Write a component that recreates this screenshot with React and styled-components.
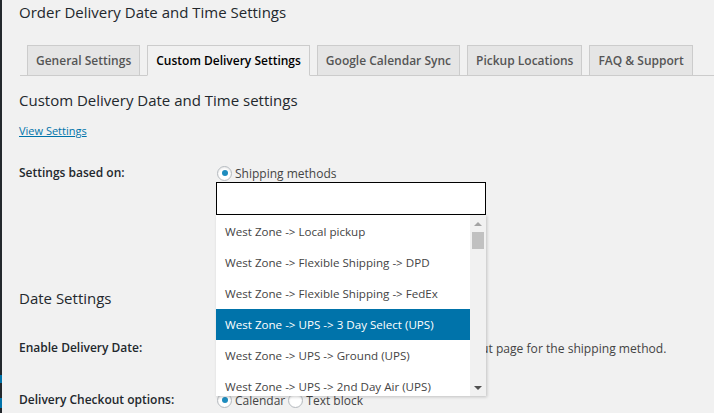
import React from 'react';
import styled, { createGlobalStyle } from 'styled-components';

const GlobalStyle = createGlobalStyle`
    html, body {
        margin: 0;
        padding: 0;
        background: #f1f1f1;
    }
    body {
        font-family: "Open Sans", "Liberation Sans", sans-serif;
        font-size: 12px;
        color: #23282d;
        overflow: hidden;
    }
`;

const tabs = ['General Settings', 'Custom Delivery Settings', 'Google Calendar Sync', 'Pickup Locations', 'FAQ & Support'];

const methods = [
    'West Zone -> Local pickup',
    'West Zone -> Flexible Shipping -> DPD',
    'West Zone -> Flexible Shipping -> FedEx',
    'West Zone -> UPS -> 3 Day Select (UPS)',
    'West Zone -> UPS -> Ground (UPS)',
    'West Zone -> UPS -> 2nd Day Air (UPS)',
];

const App = () => {
    return (
        <Page>
            <GlobalStyle />
            <AdminBar>
                <MenuMark top={375} size={8} />
                <MenuMark top={15} size={10} />
            </AdminBar>
            <Main>
                <Title>Order Delivery Date and Time Settings</Title>
                <TabNav>
                    {tabs.map((t) => (
                        <Tab key={t} active={t === 'Custom Delivery Settings'}>{t}</Tab>
                    ))}
                </TabNav>
                <SubTitle>Custom Delivery Date and Time settings</SubTitle>
                <ViewLink href="#">View Settings</ViewLink>

                <Row top={24}>
                    <Label>Settings based on:</Label>
                    <Field>
                        <RadioLine>
                            <Radio checked />
                            <span>Shipping methods</span>
                        </RadioLine>
                        <SelectWrap>
                            <SearchBox />
                            <Dropdown>
                                <Options>
                                    {methods.map((m, i) => (
                                        <Option key={m} selected={i === 3}>{m}</Option>
                                    ))}
                                </Options>
                                <Scrollbar>
                                    <Arrow up />
                                    <Thumb />
                                    <Track />
                                    <Arrow />
                                </Scrollbar>
                            </Dropdown>
                        </SelectWrap>
                    </Field>
                </Row>

                <SectionTitle>Date Settings</SectionTitle>

                <Row top={29}>
                    <Label>Enable Delivery Date:</Label>
                    <Field>
                        <RadioLine>
                            <Check />
                            <Desc>Enable Delivery Date capture on the checkout page for the shipping method.</Desc>
                        </RadioLine>
                    </Field>
                </Row>

                <Row top={34}>
                    <Label>Delivery Checkout options:</Label>
                    <Field>
                        <RadioLine>
                            <Radio checked />
                            <span>Calendar</span>
                            <Radio />
                            <span>Text block</span>
                        </RadioLine>
                    </Field>
                </Row>
            </Main>
        </Page>
    );
};

const Page = styled.div`
    display: flex;
    height: 413px;
    overflow: hidden;
`;

const AdminBar = styled.div`
    width: 2px;
    flex-shrink: 0;
    background: #23282d;
    display: flex;
    flex-direction: column;
`;

const MenuMark = styled.div`
    margin-top: ${(p) => p.top}px;
    height: ${(p) => p.size}px;
    background: #0073aa;
`;

const Main = styled.div`
    flex: 1;
    padding-left: 17px;
    display: flex;
    flex-direction: column;
    align-items: flex-start;
`;

const Title = styled.h1`
    margin: 0;
    font-size: 15px;
    line-height: 24px;
    font-weight: 400;
    color: #23282d;
`;

const TabNav = styled.div`
    align-self: stretch;
    margin-top: 21px;
    margin-left: 1px;
    padding-left: 7px;
    display: flex;
    gap: 7px;
    border-bottom: 1px solid #ccc;
`;

const Tab = styled.div`
    height: 29px;
    padding: 0 8px;
    display: flex;
    align-items: center;
    margin-bottom: -1px;
    border: 1px solid #ccc;
    border-bottom-color: ${(p) => (p.active ? '#f1f1f1' : '#ccc')};
    background: ${(p) => (p.active ? '#f1f1f1' : '#e5e5e5')};
    color: ${(p) => (p.active ? '#000' : '#555')};
    font-size: 12px;
    font-weight: 600;
    white-space: nowrap;
`;

const SubTitle = styled.h2`
    margin: 12px 0 0;
    font-size: 15px;
    line-height: 24px;
    font-weight: 400;
    color: #23282d;
`;

const SectionTitle = styled(SubTitle)`
    margin-top: 71px;
`;

const ViewLink = styled.a`
    margin-top: 10px;
    font-size: 11px;
    line-height: 18px;
    color: #0073aa;
    text-decoration: underline;
`;

const Row = styled.div`
    display: flex;
    margin-top: ${(p) => p.top}px;
`;

const Label = styled.div`
    width: 198px;
    flex-shrink: 0;
    line-height: 18px;
    font-weight: 600;
    color: #23282d;
`;

const Field = styled.div`
    display: flex;
    flex-direction: column;
`;

const RadioLine = styled.div`
    display: flex;
    align-items: center;
    height: 18px;
    gap: 3px;
    white-space: nowrap;
    color: #444;
`;

const Radio = styled.span`
    width: 13px;
    height: 13px;
    border-radius: 50%;
    border: 1px solid #b4b9be;
    background: #fff;
    box-shadow: inset 0 1px 2px rgba(0, 0, 0, 0.1);
    display: flex;
    align-items: center;
    justify-content: center;
    &::after {
        content: '';
        width: 6px;
        height: 6px;
        border-radius: 50%;
        background: #1e8cbe;
        display: ${(p) => (p.checked ? 'block' : 'none')};
    }
`;

const Check = styled.span`
    width: 14px;
    height: 14px;
    border: 1px solid #b4b9be;
    background: #fff;
`;

const Desc = styled.span`
    color: #444;
    font-size: 12.1px;
`;

const SelectWrap = styled.div`
    position: relative;
    margin-left: -1px;
    width: 270px;
`;

const SearchBox = styled.div`
    height: 31px;
    border: 1px solid #000;
    background: #fff;
`;

const Dropdown = styled.div`
    position: absolute;
    top: 100%;
    left: 0;
    width: 270px;
    height: 181px;
    background: #fff;
    box-shadow: 1px 1px 3px rgba(0, 0, 0, 0.2);
    display: flex;
    overflow: hidden;
    z-index: 2;
`;

const Options = styled.div`
    flex: 1;
    padding-top: 1px;
    font-size: 11.6px;
`;

const Option = styled.div`
    height: 31px;
    padding-left: 9px;
    display: flex;
    align-items: center;
    white-space: nowrap;
    background: ${(p) => (p.selected ? '#0073aa' : '#fff')};
    color: ${(p) => (p.selected ? '#fff' : '#444')};
`;

const Scrollbar = styled.div`
    width: 16px;
    background: #f1f1f1;
    display: flex;
    flex-direction: column;
    align-items: center;
`;

const Arrow = styled.div`
    height: 17px;
    display: flex;
    align-items: center;
    &::before {
        content: '';
        border-left: 4px solid transparent;
        border-right: 4px solid transparent;
        ${(p) => (p.up ? 'border-bottom: 4px solid #a3a3a3;' : 'border-top: 4px solid #505050;')}
    }
`;

const Thumb = styled.div`
    width: 12px;
    height: 17px;
    background: #c1c1c1;
`;

const Track = styled.div`
    flex: 1;
`;

export default App;
